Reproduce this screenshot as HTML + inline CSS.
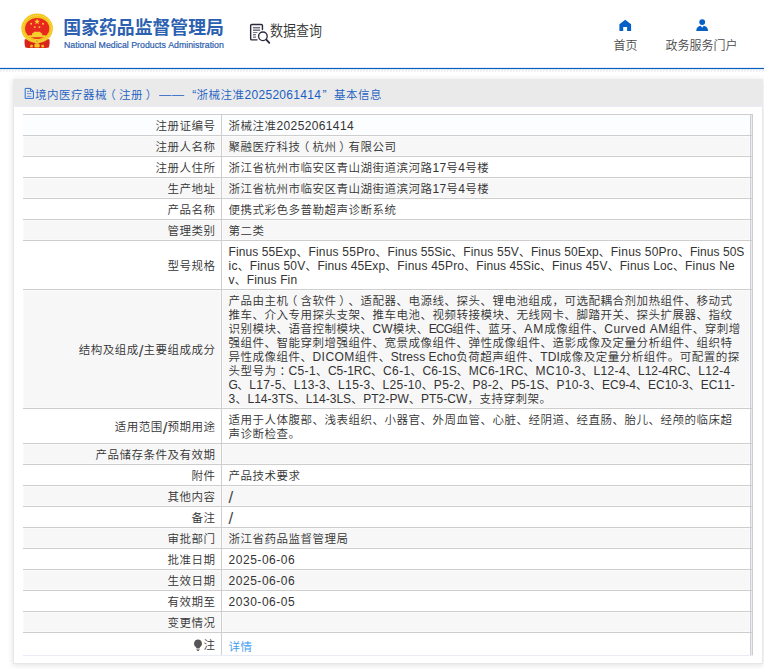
<!DOCTYPE html>
<html lang="zh-CN">
<head>
<meta charset="utf-8">
<title>国家药品监督管理局 数据查询</title>
<style>
html,body{margin:0;padding:0;}
body{width:764px;height:669px;overflow:hidden;background:#fff;position:relative;
  font-family:"Liberation Sans","Noto Sans CJK SC",sans-serif;font-size:12px;color:#333;font-weight:350;
  text-spacing-trim:space-all;font-kerning:none;}
.abs{position:absolute;}
#logo{left:20px;top:11px;width:34px;height:38px;}
#title{left:63.3px;top:16px;font-size:17.85px;line-height:24px;font-weight:700;color:#2c60b0;white-space:nowrap;}
#subtitle{-webkit-text-stroke:.2px #2c60b0;left:64px;top:39px;transform:translateY(.6px);font-size:8.77px;line-height:11px;color:#2a5cab;white-space:nowrap;transform-origin:0 0;}
#qicon{left:248px;top:22px;width:24px;height:24px;}
#qtext{left:270px;top:21px;font-size:13px;line-height:20px;color:#333;white-space:nowrap;transform:scaleY(1.13);transform-origin:0 3.4px;}
.nav{transform:translate(.4px,.6px);font-size:12px;line-height:16px;color:#4a4a4a;white-space:nowrap;text-align:center;}
#blueline{left:0;top:67px;width:764px;height:3px;background:linear-gradient(to bottom,rgba(11,95,195,.12) 0 1px,#0b5fc3 1px 2px,rgba(11,95,195,.12) 2px 3px);}
#hatch{left:0;top:69px;width:764px;height:3px;}
#panel{left:13px;top:79px;width:750px;height:585px;background:#fff;box-shadow:inset 0 0 0 1px #e7e7e7,0 1px 6px rgba(0,0,0,.13);}
#phead{left:0;top:0;width:750px;height:27px;background:#eaeaea;border-bottom:1px solid #e9ecf6;box-sizing:content-box;}
#ptitle{left:22px;top:8px;line-height:16px;color:#1a5fc2;white-space:nowrap;font-size:11.5px;letter-spacing:.5px;}
#ptitle .e{font-size:12px;letter-spacing:0;}
#tbl{left:10px;top:35px;width:730px;font-size:11.5px;letter-spacing:.5px;}
#tbl .e{font-size:12px;letter-spacing:0;}
#tbl .sl{font-size:17px;}
.row{position:relative;border-top:1px solid #cecece;display:flex;}
.row.g .l,.row.g .v{background:#f7f7f7;box-shadow:inset 0 0 0 1px rgba(255,255,255,.55);}
.row.first .l,.row.first .v{background:#fcfdfe;}
.l{width:198px;box-sizing:border-box;padding:4px 5.5px 2px 0;text-align:right;line-height:14px;display:flex;align-items:center;justify-content:flex-end;white-space:nowrap;}
.vd{width:1px;background:#cecece;}
.v{width:528px;box-sizing:border-box;padding:4px 0 2px 6.5px;line-height:14px;white-space:nowrap;min-height:20px;}
.rb{width:3px;box-sizing:border-box;border-left:1px solid #cecece;border-right:1px solid #cecece;background:#e9ecf6;}
.v a{color:#3a9af0;text-decoration:none;}
.e{font-weight:400;}
.sl{color:#4a4a4a;font-size:17px;line-height:0;position:relative;top:1.5px;}
.pl,.pr,.pc{position:relative;display:inline-block;width:12px;letter-spacing:0;text-align:left;}
.pc{left:3px;}
.pl{left:-2.8px;}
.pr{left:2.8px;}
.ln .e{letter-spacing:var(--ls,0);}
.row.last .l,.row.last .v{min-height:22px;}
.row.last .v{padding-top:7px;padding-bottom:1px;}
.row.last{border-bottom:1px solid #e9ecf6;}
.bulb{vertical-align:-1px;margin-right:1px;}
</style>
</head>
<body>
<svg id="logo" class="abs" viewBox="20 11 34 38">
<path d="M24.8 39.3 C24.3 42 24.5 45 25.4 47.5 C29 48.3 33 47.8 37.1 48 C41.2 47.8 45.2 48.3 48.8 47.5 C49.7 45 49.9 42 49.4 39.3 Z" fill="#d9241b"/>
<ellipse cx="37.1" cy="28.4" rx="15.8" ry="14.8" fill="#f3c41e"/>
<ellipse cx="37.1" cy="28.4" rx="14.3" ry="13.1" fill="none" stroke="#f9dc55" stroke-width="1.1" stroke-dasharray="1.1 0.9"/>
<ellipse cx="37.2" cy="28.4" rx="12.1" ry="10.5" fill="#e8281e"/>
<circle cx="37" cy="41.2" r="2.5" fill="#f6cf35"/>
<circle cx="37" cy="41.2" r="1" fill="#e3a512"/>
<rect x="34.4" y="43.8" width="5.3" height="3.7" rx="1.2" fill="#f3c41e"/>
<path d="M29.8 47.3 l1.1-2.7 2.1 .6 -.5 2.4z M44.4 47.3 l-1.1-2.7 -2.1 .6 .5 2.4z" fill="#f3c41e"/>
<path d="M28.7 37.2 h16.8 v-1.9 h-3.3 v-2 h-1.3 l-.6-1.6 h-6.4 l-.6 1.6 h-1.3 v2 h-3.3z" fill="#f5cf2e"/>
<path d="M37.1 18.6 l.8 2.05 2.2 .1 -1.75 1.35 .62 2.1 -1.87-1.22 -1.87 1.22 .62-2.1 -1.75-1.35 2.2-.1z" fill="#f7d232"/>
<circle cx="31.2" cy="23.8" r="0.95" fill="#f7d232"/><circle cx="43" cy="23.8" r="0.95" fill="#f7d232"/>
<circle cx="34.8" cy="27.1" r="0.95" fill="#f7d232"/><circle cx="39.4" cy="27.1" r="0.95" fill="#f7d232"/>
</svg>
<div id="title" class="abs">国家药品监督管理局</div>
<div id="subtitle" class="abs">National Medical Products Administration</div>
<svg id="qicon" class="abs" viewBox="248 22 24 24">
<path d="M262.45 29.6 V25.6 a1.15 1.15 0 0 0 -1.15 -1.15 H251.8 a1.15 1.15 0 0 0 -1.15 1.15 V38.7 a1.15 1.15 0 0 0 1.15 1.15 H257" fill="none" stroke="#2b2a3e" stroke-width="1.4" stroke-linecap="round"/>
<rect x="253" y="27.4" width="7.1" height="3.2" fill="#b9b9c2"/>
<rect x="253" y="34.4" width="2.9" height="3.1" fill="#c9c9d0"/>
<path d="M253 27.45h7.1 M253 30.45h7.1 M253 32.5h4.4 M253 34.5h2.9 M253 37.3h2.9" stroke="#4a495a" stroke-width=".75" fill="none"/>
<circle cx="262.9" cy="36.3" r="4.3" fill="#fff" stroke="#2b2a3e" stroke-width="1.35"/>
<path d="M266.3 39.6 L269.3 42.8" stroke="#2b2a3e" stroke-width="1.9" stroke-linecap="round"/>
</svg>
<div id="qtext" class="abs">数据查询</div>
<svg class="abs" style="left:615px;top:16px;width:20px;height:18px" viewBox="615 16 20 18"><path d="M625.2 19.8 L631.1 24.2 V30.9 H627.1 V27.1 H623.2 V30.9 H619.4 V24.2 Z" fill="#0660c6"/></svg>
<svg class="abs" style="left:692px;top:16px;width:20px;height:18px" viewBox="692 16 20 18"><circle cx="702.2" cy="22.1" r="2.95" fill="#0660c6"/><path d="M696.2 31 C696.3 27.6 698.3 25.9 700.7 25.7 L702.2 27.8 L703.7 25.7 C706.1 25.9 708 27.6 708.1 31 Z" fill="#0660c6"/></svg>
<div id="nav1" class="abs nav" style="left:605px;top:37px;width:40px;">首页</div>
<div id="nav2" class="abs nav" style="left:661px;top:37px;width:80px;">政务服务门户</div>
<div id="blueline" class="abs"></div>
<svg id="hatch" class="abs" width="764" height="3" viewBox="0 0 764 3"><defs><pattern id="hp" width="3" height="3" patternUnits="userSpaceOnUse"><path d="M-0.5 3.2 L2.2 0.5" stroke="#d9d9d9" stroke-width="0.9" fill="none"/></pattern></defs><rect width="764" height="3" fill="url(#hp)"/></svg>
<div id="panel" class="abs">
  <div id="phead" class="abs"></div>
  <svg class="abs" style="left:11px;top:8px;width:11px;height:13px" viewBox="24 87 11 13"><path d="M25.2 88.4 H30.6 L33.4 91.2 V98.4 H25.2 Z M30.4 88.6 V91.4 H33.2" fill="none" stroke="#2a6cd0" stroke-width="1"/><path d="M27 91.4h2.4 M27 93.6h4.4 M27 96.3h4.4" stroke="#5a86d8" stroke-width=".9" fill="none"/></svg>
  <div id="ptitle" class="abs"><span class="abs" style="left:0">境内医疗器械<span class="pl">（</span>注册<span class="pr">）</span></span><span class="abs" style="left:123.6px;top:-1px;transform:scaleX(1.067);transform-origin:0 0">——</span><span class="abs e" style="left:157.2px">“</span><span class="abs" style="left:161.5px">浙械注准</span><span class="abs e" style="left:209.5px;letter-spacing:.3px">20252061414</span><span class="abs e" style="left:287.6px">”</span><span class="abs" style="left:298.9px">基本信息</span></div>
  <div id="tbl" class="abs">
    <div class="row first"><div class="l">注册证编号</div><div class="vd"></div><div class="v"><span class="ln">浙械注准<span class="e" style="letter-spacing:0.371px">20252061414</span></span></div><div class="rb"></div></div>
    <div class="row g"><div class="l">注册人名称</div><div class="vd"></div><div class="v"><span class="ln">聚融医疗科技<span class="pl">（</span>杭州<span class="pr">）</span>有限公司</span></div><div class="rb"></div></div>
    <div class="row"><div class="l">注册人住所</div><div class="vd"></div><div class="v"><span class="ln">浙江省杭州市临安区青山湖街道滨河路<span class="e" style="letter-spacing:0.254px">17</span>号<span class="e" style="letter-spacing:0.246px">4</span>号楼</span></div><div class="rb"></div></div>
    <div class="row g"><div class="l">生产地址</div><div class="vd"></div><div class="v"><span class="ln">浙江省杭州市临安区青山湖街道滨河路<span class="e" style="letter-spacing:0.254px">17</span>号<span class="e" style="letter-spacing:0.246px">4</span>号楼</span></div><div class="rb"></div></div>
    <div class="row"><div class="l">产品名称</div><div class="vd"></div><div class="v"><span class="ln">便携式彩色多普勒超声诊断系统</span></div><div class="rb"></div></div>
    <div class="row g"><div class="l">管理类别</div><div class="vd"></div><div class="v"><span class="ln">第二类</span></div><div class="rb"></div></div>
    <div class="row"><div class="l">型号规格</div><div class="vd"></div><div class="v"><span class="ln"><span class="e" style="letter-spacing:0.106px">Finus 55Exp</span>、<span class="e" style="letter-spacing:0.217px">Finus 55Pro</span>、<span class="e" style="letter-spacing:0.098px">Finus 55Sic</span>、<span class="e" style="letter-spacing:0.183px">Finus 55V</span>、<span class="e" style="letter-spacing:0.106px">Finus 50Exp</span>、<span class="e" style="letter-spacing:0.217px">Finus 50Pro</span>、<span class="e" style="letter-spacing:0.054px">Finus 50S</span></span><br><span class="ln"><span class="e" style="letter-spacing:0.291px">ic</span>、<span class="e" style="letter-spacing:0.179px">Finus 50V</span>、<span class="e" style="letter-spacing:0.102px">Finus 45Exp</span>、<span class="e" style="letter-spacing:0.213px">Finus 45Pro</span>、<span class="e" style="letter-spacing:0.094px">Finus 45Sic</span>、<span class="e" style="letter-spacing:0.179px">Finus 45V</span>、<span class="e" style="letter-spacing:0.142px">Finus Loc</span>、<span class="e" style="letter-spacing:0.250px">Finus Ne</span></span><br><span class="ln"><span class="e" style="letter-spacing:0.259px">v</span>、<span class="e" style="letter-spacing:0.120px">Finus Fin</span></span></div><div class="rb"></div></div>
    <div class="row g"><div class="l">结构及组成<span class="e sl">/</span>主要组成成分</div><div class="vd"></div><div class="v"><span class="ln">产品由主机<span class="pl">（</span>含软件<span class="pr">）</span>、适配器、电源线、探头、锂电池组成，可选配耦合剂加热组件、移动式</span><br><span class="ln">推车、介入专用探头支架、推车电池、视频转接模块、无线网卡、脚踏开关、探头扩展器、指纹</span><br><span class="ln">识别模块、语音控制模块、<span class="e" style="letter-spacing:0.083px">CW</span>模块、<span class="e" style="letter-spacing:-0.812px">ECG</span>组件、蓝牙、<span class="e" style="letter-spacing:1.021px">AM</span>成像组件、<span class="e" style="letter-spacing:0.487px">Curved AM</span>组件、穿刺增</span><br><span class="ln">强组件、智能穿刺增强组件、宽景成像组件、弹性成像组件、造影成像及定量分析组件、组织特</span><br><span class="ln">异性成像组件、<span class="e" style="letter-spacing:0.456px">DICOM</span>组件、<span class="e" style="letter-spacing:0.069px">Stress Echo</span>负荷超声组件、<span class="e" style="letter-spacing:0.073px">TDI</span>成像及定量分析组件。可配置的探</span><br><span class="ln">头型号为<span class="pc">：</span><span class="e" style="letter-spacing:0.361px">C5-1</span>、<span class="e" style="letter-spacing:-0.038px">C5-1RC</span>、<span class="e" style="letter-spacing:0.361px">C6-1</span>、<span class="e" style="letter-spacing:0.055px">C6-1S</span>、<span class="e" style="letter-spacing:0.189px">MC6-1RC</span>、<span class="e" style="letter-spacing:0.544px">MC10-3</span>、<span class="e" style="letter-spacing:0.359px">L12-4</span>、<span class="e" style="letter-spacing:0.018px">L12-4RC</span>、<span class="e" style="letter-spacing:0.359px">L12-4</span></span><br><span class="ln"><span class="e" style="letter-spacing:-0.548px">G</span>、<span class="e" style="letter-spacing:0.340px">L17-5</span>、<span class="e" style="letter-spacing:0.340px">L13-3</span>、<span class="e" style="letter-spacing:0.340px">L15-3</span>、<span class="e" style="letter-spacing:0.325px">L25-10</span>、<span class="e" style="letter-spacing:0.316px">P5-2</span>、<span class="e" style="letter-spacing:0.316px">P8-2</span>、<span class="e" style="letter-spacing:0.015px">P5-1S</span>、<span class="e" style="letter-spacing:0.303px">P10-3</span>、<span class="e" style="letter-spacing:-0.028px">EC9-4</span>、<span class="e" style="letter-spacing:0.018px">EC10-3</span>、<span class="e" style="letter-spacing:-0.028px">EC11-</span></span><br><span class="ln"><span class="e" style="letter-spacing:0.267px">3</span>、<span class="e" style="letter-spacing:0.020px">L14-3TS</span>、<span class="e" style="letter-spacing:0.017px">L14-3LS</span>、<span class="e" style="letter-spacing:0.077px">PT2-PW</span>、<span class="e" style="letter-spacing:0.094px">PT5-CW</span>，支持穿刺架。</span></div><div class="rb"></div></div>
    <div class="row"><div class="l">适用范围<span class="e sl">/</span>预期用途</div><div class="vd"></div><div class="v"><span class="ln">适用于人体腹部、浅表组织、小器官、外周血管、心脏、经阴道、经直肠、胎儿、经颅的临床超</span><br><span class="ln">声诊断检查。</span></div><div class="rb"></div></div>
    <div class="row g"><div class="l">产品储存条件及有效期</div><div class="vd"></div><div class="v"><span class="ln"></span></div><div class="rb"></div></div>
    <div class="row"><div class="l">附件</div><div class="vd"></div><div class="v"><span class="ln">产品技术要求</span></div><div class="rb"></div></div>
    <div class="row g"><div class="l">其他内容</div><div class="vd"></div><div class="v"><span class="ln"><span class="e sl">/</span></span></div><div class="rb"></div></div>
    <div class="row"><div class="l">备注</div><div class="vd"></div><div class="v"><span class="ln"><span class="e sl">/</span></span></div><div class="rb"></div></div>
    <div class="row g"><div class="l">审批部门</div><div class="vd"></div><div class="v"><span class="ln">浙江省药品监督管理局</span></div><div class="rb"></div></div>
    <div class="row"><div class="l">批准日期</div><div class="vd"></div><div class="v"><span class="ln"><span class="e" style="letter-spacing:0.541px">2025-06-06</span></span></div><div class="rb"></div></div>
    <div class="row g"><div class="l">生效日期</div><div class="vd"></div><div class="v"><span class="ln"><span class="e" style="letter-spacing:0.541px">2025-06-06</span></span></div><div class="rb"></div></div>
    <div class="row"><div class="l">有效期至</div><div class="vd"></div><div class="v"><span class="ln"><span class="e" style="letter-spacing:0.541px">2030-06-05</span></span></div><div class="rb"></div></div>
    <div class="row g"><div class="l">变更情况</div><div class="vd"></div><div class="v"><span class="ln"></span></div><div class="rb"></div></div>
    <div class="row last"><div class="l"><svg class="bulb" viewBox="0 0 10 12" width="10" height="12"><path d="M5 0.6a4 4 0 0 0-2.2 7.3c.3.3.5.7.5 1.1h3.4c0-.4.2-.8.5-1.1A4 4 0 0 0 5 .6z" fill="#555"/><rect x="3.4" y="9.6" width="3.2" height="1" fill="#555"/><rect x="3.9" y="11" width="2.2" height=".8" fill="#555"/></svg>注</div><div class="vd"></div><div class="v"><span class="ln"><a>详情</a></span></div><div class="rb"></div></div>
  </div>
</div>
</body>
</html>
